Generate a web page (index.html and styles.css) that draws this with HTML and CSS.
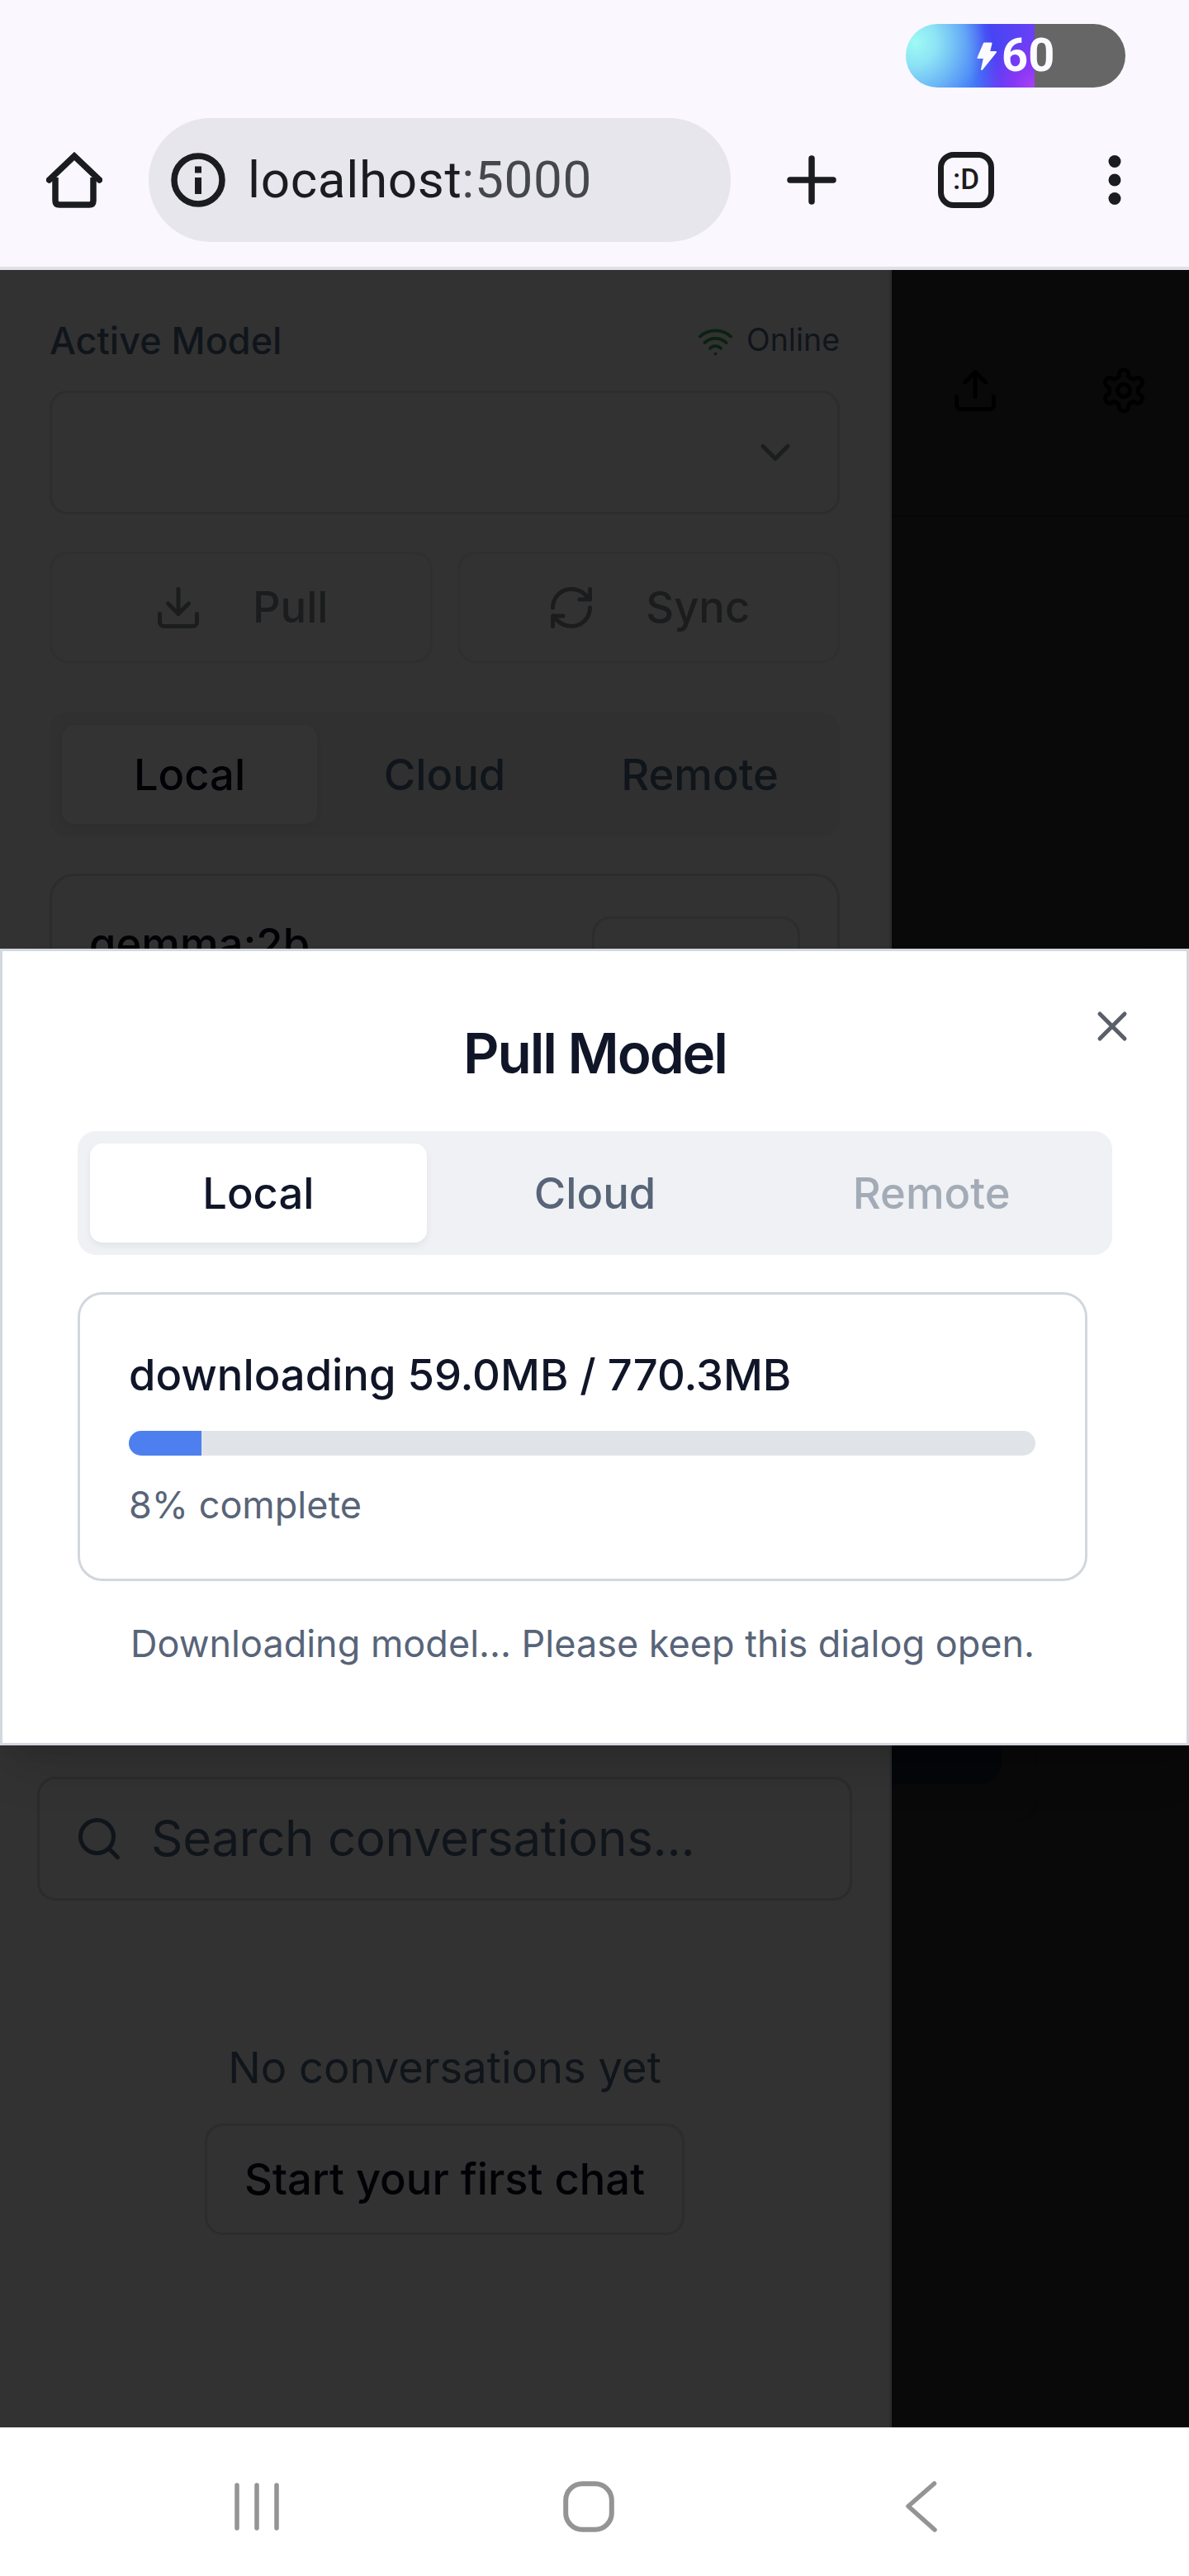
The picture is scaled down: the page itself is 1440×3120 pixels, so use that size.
FILE: index.html
```html
<!DOCTYPE html>
<html lang="en">
<head>
<meta charset="utf-8">
<title>Pull Model</title>
<link rel="stylesheet" href="styles.css">
</head>
<body>
<div class="phone">
  <header class="browser">
    <div class="status">
      <div class="battery">
        <svg class="bolt" viewBox="0 0 24 34"><path d="M9 1.500H17.500L15 12H23L6 33L9 19H1.500Z" fill="#fbfaff" stroke="#fbfaff" stroke-width="2" stroke-linejoin="round"/></svg>
        <span>60</span>
      </div>
    </div>
    <div class="toolbar">
      <svg class="home" viewBox="0 0 68 68" fill="none" stroke="#1b1c20" stroke-width="7.500"><path d="M11 31V59q0 5 5 5H52q5 0 5-5V31" stroke-linejoin="round"/><path d="M3.500 34L34 5L64.500 34" stroke-linecap="round"/></svg>
      <div class="url">
        <svg class="info" viewBox="0 0 66 66"><circle cx="33" cy="33" r="29" fill="none" stroke="#1b1c20" stroke-width="7.500"/><path d="M29 16.500h8v8h-8zM29 30h8v20h-8z" fill="#1b1c20"/></svg>
        <span class="host">localhost<span class="port">:5000</span></span>
      </div>
      <svg class="plus" viewBox="0 0 60 60" stroke="#1b1c20" stroke-width="7.500" stroke-linecap="round"><path d="M30 4V56M4 30H56"/></svg>
      <div class="tabcount">:D</div>
      <svg class="dots" viewBox="0 0 16 60" fill="#1b1c20"><circle cx="8" cy="7.500" r="7.500"/><circle cx="8" cy="30" r="7.500"/><circle cx="8" cy="52.500" r="7.500"/></svg>
    </div>
  </header>

  <div class="app">
    <aside class="sidebar">
      <div class="models">
        <div class="row">
          <span class="label">Active Model</span>
          <span class="online">
            <svg class="wifi" viewBox="0 0 24 24"><path d="M12 20h.01M2 8.820a15 15 0 0 1 20 0M5 12.859a10 10 0 0 1 14 0M8.500 16.429a5 5 0 0 1 7 0"/></svg>
            <span class="online-text">Online</span>
          </span>
        </div>
        <div class="select">
          <svg class="icon" viewBox="0 0 24 24"><path d="m6 9 6 6 6-6"/></svg>
        </div>
        <div class="actions">
          <div class="btn muted">
            <svg class="icon" viewBox="0 0 24 24"><path d="M21 15v4a2 2 0 0 1-2 2H5a2 2 0 0 1-2-2v-4M7 10l5 5 5-5M12 15V3"/></svg>
            <span>Pull</span>
          </div>
          <div class="btn muted">
            <svg class="icon" viewBox="0 0 24 24"><path d="M3 12a9 9 0 0 1 9-9 9.750 9.750 0 0 1 6.740 2.740L21 8M21 3v5h-5M21 12a9 9 0 0 1-9 9 9.750 9.750 0 0 1-6.740-2.740L3 16M8 16H3v5"/></svg>
            <span>Sync</span>
          </div>
        </div>
        <div class="tabs dim">
          <div class="tab active">Local</div>
          <div class="tab">Cloud</div>
          <div class="tab">Remote</div>
        </div>
        <div class="model-card">
          <span class="model-name">gemma:2b</span>
          <span class="model-btn"></span>
        </div>
      </div>
      <div class="chats">
        <div class="search">
          <svg class="icon" viewBox="0 0 24 24"><circle cx="11" cy="11" r="8"/><path d="m21 21-4.300-4.300"/></svg>
          <span>Search conversations...</span>
        </div>
        <p class="empty">No conversations yet</p>
        <div class="btn start"><span>Start your first chat</span></div>
      </div>
    </aside>

    <main class="main">
      <div class="main-head">
        <svg class="icon" viewBox="0 0 24 24"><path d="M21 15v4a2 2 0 0 1-2 2H5a2 2 0 0 1-2-2v-4M17 8l-5-5-5 5M12 3v12"/></svg>
        <svg class="icon" viewBox="0 0 24 24"><path d="M12.220 2h-.44a2 2 0 0 0-2 2v.18a2 2 0 0 1-1 1.730l-.43.25a2 2 0 0 1-2 0l-.15-.08a2 2 0 0 0-2.730.73l-.22.38a2 2 0 0 0 .73 2.730l.15.1a2 2 0 0 1 1 1.720v.51a2 2 0 0 1-1 1.740l-.15.09a2 2 0 0 0-.73 2.730l.22.38a2 2 0 0 0 2.730.73l.15-.08a2 2 0 0 1 2 0l.43.25a2 2 0 0 1 1 1.730V20a2 2 0 0 0 2 2h.44a2 2 0 0 0 2-2v-.18a2 2 0 0 1 1-1.730l.43-.25a2 2 0 0 1 2 0l.15.08a2 2 0 0 0 2.730-.73l.22-.39a2 2 0 0 0-.73-2.730l-.15-.08a2 2 0 0 1-1-1.740v-.5a2 2 0 0 1 1-1.740l.15-.09a2 2 0 0 0 .73-2.730l-.22-.38a2 2 0 0 0-2.730-.73l-.15.08a2 2 0 0 1-2 0l-.43-.25a2 2 0 0 1-1-1.730V4a2 2 0 0 0-2-2z"/><circle cx="12" cy="12" r="3"/></svg>
      </div>
      <div class="prompt-card"><div class="prompt-btn"></div></div>
    </main>

    <section class="dialog">
      <svg class="icon close" viewBox="0 0 24 24"><path d="M18 6 6 18M6 6l12 12"/></svg>
      <h2 class="title">Pull Model</h2>
      <div class="tabs">
        <div class="tab active">Local</div>
        <div class="tab">Cloud</div>
        <div class="tab disabled">Remote</div>
      </div>
      <div class="progress-card">
        <div class="progress-title">downloading 59.0MB / 770.3MB</div>
        <div class="bar"><div class="fill" style="width:8%"></div></div>
        <div class="percent">8% complete</div>
      </div>
      <p class="note">Downloading model... Please keep this dialog open.</p>
    </section>
  </div>

  <footer class="nav">
    <svg class="recents" viewBox="0 0 54 58" stroke="#949494" stroke-width="5.500" stroke-linecap="round"><path d="M3 3V55M27 3V55M51 3V55"/></svg>
    <svg class="homebtn" viewBox="0 0 62 62"><rect x="3.200" y="3.200" width="55.600" height="55.600" rx="20" fill="none" stroke="#949494" stroke-width="6"/></svg>
    <svg class="back" viewBox="0 0 38 62" fill="none" stroke="#949494" stroke-width="5.500" stroke-linecap="round" stroke-linejoin="round"><path d="M34.500 3L3 30.500L35 59"/></svg>
  </footer>
</div>
</body>
</html>
```
FILE: styles.css
```css
* { box-sizing: border-box; }
body { margin: 0; font-family: Inter, "Liberation Sans", sans-serif; }
p, h2 { margin: 0; }
.phone { width: 1440px; height: 3120px; display: flex; flex-direction: column; overflow: hidden; background: #fff; }
svg { display: block; flex: none; }

/* Browser chrome */
.browser { height: 327px; background: #faf7ff; border-bottom: 4px solid #e1e0e7; }
.status { height: 143px; padding: 29px 77px 0 0; display: flex; justify-content: flex-end; }
.battery {
  width: 266px; height: 77px; border-radius: 39px; display: flex; align-items: center; padding-left: 86px; gap: 6px;
  background:
    radial-gradient(ellipse 85px 90px at 12px 22px, #9dfbf3 0, rgba(145,232,245,.95) 30%, rgba(120,200,245,0) 100%) 0 0 / 156px 77px no-repeat,
    radial-gradient(circle 65px at 156px 77px, #ab42f2 0, rgba(145,52,246,.8) 40%, rgba(120,60,246,0) 100%) 0 0 / 156px 77px no-repeat,
    linear-gradient(80deg, #4a90f7 0, #447cf7 48%, #4745f3 68%, #6a40f6 100%) 0 0 / 156px 77px no-repeat,
    #666;
  color: #fbfaff; font: 700 56px/75px Roboto, sans-serif;
}
.bolt { width: 24px; height: 34px; }
.toolbar { display: flex; align-items: center; height: 150px; padding-left: 56px; }
.home { width: 68px; height: 68px; }
.url { width: 705px; height: 150px; margin-left: 56px; border-radius: 75px; background: #e7e6ec; display: flex; align-items: center; padding-left: 27px; }
.info { width: 66px; height: 66px; }
.host { margin-left: 27px; font: 400 62px/150px Roboto, sans-serif; letter-spacing: .65px; color: #1b1c20; }
.port { color: #44474b; }
.plus { width: 60px; height: 60px; margin-left: 68px; }
.tabcount { width: 68px; height: 68px; margin-left: 123px; border: 7.500px solid #1b1c20; border-radius: 19px; color: #1b1c20; text-align: center; font: 500 35px/53px Roboto, sans-serif; }
.dots { width: 16px; height: 60px; margin-left: 138px; }

/* App behind the scrim */
.app { position: relative; height: 2613px; display: flex; background: #090909; }
.icon, .wifi { fill: none; stroke: currentColor; stroke-width: 2; stroke-linecap: round; stroke-linejoin: round; }
.icon { width: 60px; height: 60px; }
.sidebar { width: 1080px; background: #323232; border-right: 3px solid #2b2c2d; color: #10151b; display: flex; flex-direction: column; }
.models { height: 1780px; padding: 56px 60px 0; overflow: hidden; }
.row { display: flex; justify-content: space-between; align-items: center; height: 60px; }
.label { font-size: 45px; font-weight: 500; line-height: 60px; }
.online { display: flex; align-items: center; gap: 15px; }
.wifi { width: 45px; height: 45px; color: #0b2111; }
.online-text { font-size: 37.500px; line-height: 56px; padding-bottom: 3px; }
.select { height: 150px; margin-top: 30px; border: 3px solid #2b2d2e; border-radius: 22px; display: flex; align-items: center; justify-content: flex-end; padding-right: 45px; color: #1c1d1e; }
.actions { display: flex; gap: 30px; margin-top: 45px; }
.btn { height: 135px; border: 3px solid #2b2c2d; border-radius: 22px; display: flex; align-items: center; justify-content: center; gap: 60px; font-size: 52.500px; font-weight: 500; }
.btn span { padding-bottom: 2px; }
.muted { flex: 1; color: #1b1c1d; border-color: #2e302f; }
.tabs { height: 150px; padding: 15px; border-radius: 22px; background: #eff1f5; display: grid; grid-template-columns: repeat(3, 1fr); }
.tab { border-radius: 15px; font-size: 52.500px; font-weight: 500; line-height: 120px; text-align: center; color: #586478; }
.tab.active { background: #fff; color: #101628; box-shadow: 0 4px 8px rgba(0,0,0,.06); }
.tab.disabled { color: #a3abb6; }
.dim { margin-top: 60px; background: #303030; }
.dim .tab { color: #10151b; }
.dim .tab.active { background: #333; color: #020206; box-shadow: 0 4px 8px rgba(0,0,0,.04); }
.model-card { margin-top: 45px; height: 300px; border: 3px solid #2b2c2d; border-radius: 30px; padding: 49px 45px 0; display: flex; justify-content: space-between; color: #020206; }
.model-name { font-size: 52.500px; font-weight: 500; line-height: 75px; margin-top: -4px; }
.model-btn { width: 252px; height: 135px; border: 3px solid #2b2d2e; border-radius: 22px; }
.chats { display: flex; flex-direction: column; align-items: center; padding: 45px 45px 0; }
.search { align-self: stretch; height: 150px; border: 3px solid #2a2b2c; border-radius: 22px; display: flex; align-items: center; padding-left: 42px; gap: 33px; font-size: 60px; letter-spacing: -.3px; }
.search span { padding-bottom: 3px; }
.empty { margin-top: 165px; font-size: 52.500px; line-height: 75px; }
.start { width: 581px; margin-top: 30px; color: #020206; }

.main { flex: 1; color: #000; }
.main-head { height: 300px; border-bottom: 3px solid #070707; display: flex; gap: 120px; padding: 116px 0 0 71px; }
.prompt-card { width: 177px; height: 200px; margin-top: 1380px; border: solid #080808; border-width: 0 2px 2px 0; border-radius: 0 0 28px 0; }
.prompt-btn { width: 133px; height: 154px; background: #050609; border-radius: 0 0 26px 0; }

/* Dialog over the app */
.dialog { position: absolute; left: 0; top: 822px; width: 1440px; height: 965px; background: #fff; border: 3px solid #d2d7e0; padding: 92px 90px 0 91px; box-shadow: 0 38px 56px -11px rgba(0,0,0,.12), 0 15px 22px -15px rgba(0,0,0,.12); }
.close { position: absolute; left: 1314px; top: 61px; color: #5b5f6a; }
.title { height: 66px; margin-top: -1px; font-size: 67.500px; line-height: 66px; font-weight: 600; letter-spacing: -2.150px; text-align: center; color: #101628; }
.dialog .tabs { margin-top: 61px; }
.progress-card { width: 1223px; height: 350px; margin-top: 45px; border: 3px solid #d2d7de; border-radius: 30px; padding: 60px 60px 0 59px; }
.progress-title { color: #101628; font-size: 52.500px; line-height: 75px; font-weight: 500; white-space: nowrap; }
.bar { height: 30px; margin-top: 30px; border-radius: 15px; background: #e0e4e8; overflow: hidden; }
.fill { height: 30px; background: #4d80ee; }
.percent { margin-top: 30px; color: #586478; font-size: 45px; line-height: 60px; }
.note { width: 1223px; margin-top: 46px; text-align: center; color: #586478; font-size: 45px; line-height: 60px; white-space: nowrap; }

/* System navigation */
.nav { height: 180px; background: #fff; display: flex; align-items: flex-start; padding: 65px 0 0 284px; }
.recents { width: 54px; height: 58px; margin-top: 2px; }
.homebtn { width: 62px; height: 62px; margin-left: 344px; }
.back { width: 38px; height: 62px; margin-left: 353px; }
```
